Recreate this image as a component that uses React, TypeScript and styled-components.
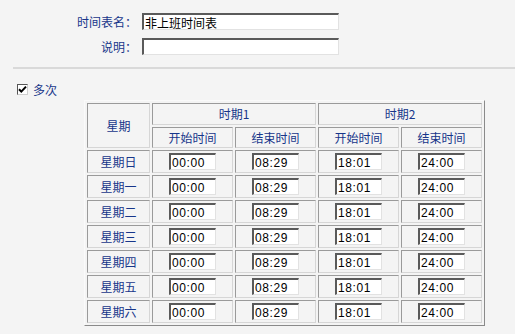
import styled, { createGlobalStyle } from "styled-components";

const colors = {
  page: "#f4f4f4",
  text: "#17368a",
  divider: "#d9d9d9",
  cellDark: "#9a9a9a",
  cellLight: "#d6d6d6",
  tableDark: "#8a8a8a",
  tableLight: "#fafafa",
  inputDark: "#5a5a5a",
  inputLight: "#e2e2e2",
};

const GlobalStyle = createGlobalStyle`
  html, body {
    margin: 0;
    padding: 0;
    background: ${colors.page};
    font-family: "Noto Sans CJK SC", "Liberation Sans", sans-serif;
    font-size: 12px;
  }
`;

const Page = styled.div`
  padding-top: 9px;
  width: 515px;
  height: 334px;
  box-sizing: border-box;
`;

const FormRow = styled.div`
  display: flex;
  align-items: center;
  height: 25px;
`;

const Label = styled.label`
  width: 137px;
  text-align: right;
  color: ${colors.text};
  line-height: 1;
`;

const TextInput = styled.input<{ $w: number }>`
  box-sizing: border-box;
  width: ${(p) => p.$w}px;
  height: 17px;
  margin: 0;
  padding: 0 2px;
  background: #fff;
  color: #000;
  font-family: "Noto Sans CJK SC", "Liberation Sans", sans-serif;
  font-size: 12px;
  line-height: 1;
  border-style: solid;
  border-width: 2px 1px 1px 2px;
  border-color: ${colors.inputDark} ${colors.inputLight} ${colors.inputLight} ${colors.inputDark};
  outline: none;
`;

const NameInput = styled(TextInput)`
  margin-left: 5px;
  padding: 0 1px;
`;

const TimeInput = styled(TextInput)`
  font-family: "Liberation Sans", sans-serif;
  letter-spacing: 0.6px;
  padding: 1px 1px 0;
`;

const Divider = styled.div`
  margin: 8px 0 0 13px;
  height: 2px;
  background: ${colors.divider};
`;

const CheckRow = styled.div`
  display: flex;
  align-items: center;
  gap: 5px;
  height: 22px;
  margin: 9px 0 0 17px;
  color: ${colors.text};
`;

const CheckBox = styled.span`
  box-sizing: border-box;
  width: 11px;
  height: 11px;
  display: flex;
  align-items: center;
  justify-content: center;
  background: #fff;
  border-style: solid;
  border-width: 1px;
  border-color: #555 #cfcfcf #cfcfcf #555;
`;

const Table = styled.table`
  margin-left: 84px;
  width: 401px;
  border-collapse: separate;
  border-spacing: 2px;
  border-style: solid;
  border-width: 1px;
  border-color: ${colors.tableLight} ${colors.tableDark} ${colors.tableDark} ${colors.tableLight};
`;

const Cell = styled.td<{ $h: number; $w?: number }>`
  box-sizing: border-box;
  height: ${(p) => p.$h}px;
  ${(p) => (p.$w ? `width: ${p.$w}px;` : "")}
  padding: 0;
  text-align: center;
  vertical-align: middle;
  font-weight: normal;
  color: ${colors.text};
  line-height: 1;
  border-style: solid;
  border-width: 1px;
  border-color: ${colors.cellDark} ${colors.cellLight} ${colors.cellLight} ${colors.cellDark};
`;

const InputCell = styled(Cell)`
  & > input {
    display: block;
    margin: 0 auto;
  }
`;

const days = ["星期日", "星期一", "星期二", "星期三", "星期四", "星期五", "星期六"];
const periods = [
  ["00:00", "08:29"],
  ["18:01", "24:00"],
];

export default function App() {
  return (
    <Page>
      <GlobalStyle />
      <FormRow>
        <Label>时间表名：</Label>
        <NameInput $w={197} defaultValue="非上班时间表" />
      </FormRow>
      <FormRow>
        <Label>说明：</Label>
        <NameInput $w={197} defaultValue="" />
      </FormRow>
      <Divider />
      <CheckRow>
        <CheckBox>
          <svg width="9" height="9" viewBox="0 0 9 9">
            <path d="M1 4.2 L3.3 6.6 L8 1.6" fill="none" stroke="#000" strokeWidth="2" />
          </svg>
        </CheckBox>
        <span>多次</span>
      </CheckRow>
      <Table>
        <tbody>
          <tr>
            <Cell as="th" rowSpan={2} $h={45} $w={63}>
              星期
            </Cell>
            <Cell as="th" colSpan={2} $h={22}>
              时期1
            </Cell>
            <Cell as="th" colSpan={2} $h={22}>
              时期2
            </Cell>
          </tr>
          <tr>
            <Cell as="th" $h={21} $w={81}>开始时间</Cell>
            <Cell as="th" $h={21} $w={81}>结束时间</Cell>
            <Cell as="th" $h={21} $w={81}>开始时间</Cell>
            <Cell as="th" $h={21} $w={81}>结束时间</Cell>
          </tr>
          {days.map((day) => (
            <tr key={day}>
              <Cell $h={23} $w={63}>{day}</Cell>
              {periods.map(([start, end], i) => [
                <InputCell key={`s${i}`} $h={23} $w={81}>
                  <TimeInput $w={47} defaultValue={start} />
                </InputCell>,
                <InputCell key={`e${i}`} $h={23} $w={81}>
                  <TimeInput $w={47} defaultValue={end} />
                </InputCell>,
              ])}
            </tr>
          ))}
        </tbody>
      </Table>
    </Page>
  );
}
